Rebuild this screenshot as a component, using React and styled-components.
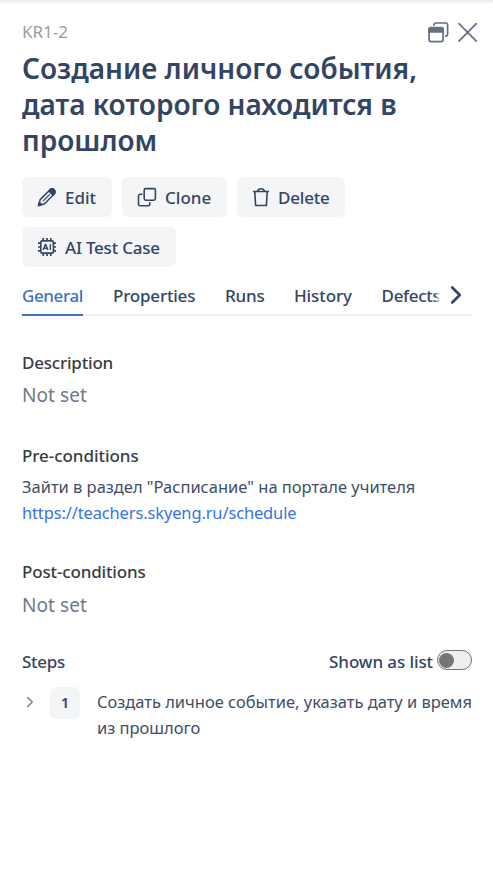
import React from 'react';
import styled, { createGlobalStyle } from 'styled-components';

const Global = createGlobalStyle`
  * { box-sizing: border-box; }
  body { margin: 0; background: #fff; }
  body, button { font-family: "Noto Sans", "Open Sans", sans-serif; }
  button { border: 0; background: none; padding: 0; margin: 0; }
  svg { display: block; flex: none; }
`;

const Panel = styled.main`
  height: 875px;
  padding: 20px 21px 0 22px;
  overflow: hidden;
  color: #344563;
  background: linear-gradient(#ebebed 0, #fff 4px);
`;
const Header = styled.header`
  display: flex;
  justify-content: space-between;
  height: 30px;
  margin-right: -6px;
`;
const CaseId = styled.span`
  font-size: 17px;
  line-height: 24px;
  color: #969dab;
`;
const HeaderActions = styled.div`
  display: flex;
  gap: 8px;
  padding-top: 1px;
  color: #667085;
`;
const IconButton = styled.button`
  display: flex;
  height: 24px;
  color: inherit;
`;
const Title = styled.h1`
  margin: 0;
  font-size: 28px;
  line-height: 36px;
  font-weight: 600;
  white-space: nowrap;
`;
const Actions = styled.div`
  display: flex;
  flex-wrap: wrap;
  gap: 10px;
  margin-top: 19px;
`;
const ActionButton = styled.button`
  display: flex;
  align-items: center;
  gap: 8px;
  width: ${(p) => p.$width}px;
  height: 40px;
  padding-left: 15px;
  border-radius: 6px;
  background: #f3f5f7;
  color: #344563;
  font-size: 17px;
  font-weight: 500;
  letter-spacing: ${(p) => p.$tracking || 0}px;
  white-space: nowrap;
`;
const TabBar = styled.nav`
  position: relative;
  display: flex;
  gap: 30px;
  height: 41px;
  margin-top: 8px;
  overflow: hidden;
  box-shadow: inset 0 -2px #eeeff1;
`;
const Tab = styled.button`
  flex: none;
  height: 41px;
  padding-top: 2px;
  border-bottom: 2px solid ${(p) => (p.$active ? '#4270c4' : 'transparent')};
  color: ${(p) => (p.$active ? '#4270c4' : '#344563')};
  width: ${(p) => p.$width}px;
  text-align: left;
  white-space: nowrap;
  font-size: 17px;
  font-weight: 500;
  letter-spacing: ${(p) => p.$tracking}px;
`;
const ScrollNext = styled.button`
  position: absolute;
  right: 0;
  top: 0;
  display: flex;
  align-items: center;
  justify-content: center;
  width: 37px;
  height: 39px;
  padding-left: 4px;
  color: #344563;
  background: linear-gradient(90deg, #fff0 0, #fffc 4px, #fff 8px);
`;
const Section = styled.section`
  margin-top: ${(p) => p.$top}px;
`;
const Label = styled.h2`
  margin: 0;
  font-size: 17px;
  line-height: 26px;
  font-weight: 500;
  letter-spacing: ${(p) => p.$tracking || 0}px;
  color: ${(p) => (p.$blue ? '#344563' : '#3a3c42')};
`;
const Empty = styled.p`
  margin: ${(p) => p.$top || 6}px 0 0;
  font-size: 19px;
  line-height: 26px;
  letter-spacing: 0.08px;
  color: #6e7889;
`;
const Body = styled.p`
  margin: ${(p) => p.$top || 0}px 0 0;
  font-size: 16.48px;
  line-height: 26px;
  color: #414e67;
  white-space: nowrap;
`;
const Link = styled.a`
  color: #3673e5;
  letter-spacing: -0.13px;
`;
const StepsHead = styled.div`
  display: flex;
  align-items: center;
  justify-content: space-between;
`;
const ToggleLabel = styled.div`
  display: flex;
  gap: 4px;
`;
const Toggle = styled.span`
  display: flex;
  align-items: center;
  width: 35px;
  height: 20px;
  margin-top: 1px;
  padding-left: 1px;
  border: 1px solid #737373;
  border-radius: 10px;
  background: #efefef;
`;
const Knob = styled.span`
  width: 15px;
  height: 15px;
  border-radius: 50%;
  background: #757575;
`;
const Step = styled.div`
  display: flex;
  align-items: flex-start;
  margin-top: 12px;
`;
const Expander = styled.span`
  width: 28px;
  padding: 9px 0 0 2px;
  color: #727b8c;
`;
const Number = styled.span`
  width: 30px;
  height: 32px;
  margin-right: 17px;
  border-radius: 6px;
  background: #f3f5f7;
  text-align: center;
  font-size: 15px;
  font-weight: 600;
  line-height: 31px;
`;

const Windows = () => (
  <svg width="21" height="22" viewBox="0 0 21 22" fill="none" stroke="currentColor" strokeWidth="1.7">
    <rect x="1.1" y="6.8" width="14" height="13.8" rx="2" />
    <path d="M1 11V8.2Q1 6.5 3 6.5h10.2q2 0 2 1.7V11z" fill="currentColor" />
    <path d="M5.8 4.8Q5.8 2 8.2 2h9.4q2 0 2 2v9q0 2-2.6 2.3" />
  </svg>
);
const Close = () => (
  <svg width="21" height="22" viewBox="0 0 21 22" fill="none" stroke="currentColor" strokeWidth="1.7" strokeLinecap="round">
    <path d="m2 2.7 17.3 17.5M19.3 2.7 2 20.2" />
  </svg>
);
const Pencil = () => (
  <svg width="20" height="20" viewBox="0 0 20 20" fill="none" stroke="currentColor" strokeWidth="1.5" strokeLinejoin="round">
    <path d="M1.8 18.2 3.2 12.6 12.8 3Q15 .8 17.1 2.7T17 7.2L7.6 16.7z" />
    <path d="m11.8 4 1.7-1.7Q15.4 1 17.1 2.7t.6 3.8l-1.7 1.8zM1.4 18.7l.8-3.4 2.4 2.4z" fill="currentColor" />
    <path d="M6 14.1 12.7 7.4" strokeWidth="1.3" />
  </svg>
);
const Copy = () => (
  <svg width="20" height="20" viewBox="0 0 20 20" fill="none" stroke="currentColor" strokeWidth="1.6">
    <rect x="7.2" y="1.6" width="11.2" height="11.6" rx="1.6" />
    <path d="M5.5 7.3H2.9Q1.5 7.3 1.5 9v8q0 1.7 1.6 1.7h8q1.7 0 1.7-1.7v-1.8" />
  </svg>
);
const Trash = () => (
  <svg width="18" height="20" viewBox="0 0 18 20" fill="none" stroke="currentColor" strokeWidth="1.6" strokeLinejoin="round">
    <path d="M1 4.5h16M5.4 4.2C6 2.4 7.4 1.7 9 1.7s3 .7 3.6 2.5M2.8 4.8l.8 13.7h10.8l.8-13.7" />
  </svg>
);
const Chip = () => (
  <svg width="20" height="20" viewBox="0 0 20 20" fill="none" stroke="currentColor" strokeWidth="1.7">
    <rect x="3.8" y="3.8" width="12.6" height="12.4" rx="1.5" />
    <path d="M6.2 1v2.5m3.8-2.5v2.5M13.8 1v2.5M6.2 16.5V19m3.8-2.5V19m3.8-2.5V19M1 6.2h2.5M1 10h2.5M1 13.8h2.5M16.5 6.2H19M16.5 10H19M16.5 13.8H19" />
    <path d="m6.2 12.9 2.1-5.4h.5l2.1 5.4M7 11.3h3M13.3 7.2v5.7" strokeWidth="1.4" />
  </svg>
);
const Chevron = ({ size, width }) => (
  <svg width={size} height={size} viewBox="0 0 20 20" fill="none" stroke="currentColor" strokeWidth={width} strokeLinecap="round" strokeLinejoin="round">
    <path d="m6.2 2.5 7.6 7.5-7.6 7.5" />
  </svg>
);

const actions = [
  { text: 'Edit', icon: Pencil, width: 90 },
  { text: 'Clone', icon: Copy, width: 105 },
  { text: 'Delete', icon: Trash, width: 108, tracking: -0.2 },
  { text: 'AI Test Case', icon: Chip, width: 154, tracking: -0.22 },
];
const tabs = [
  ['General', 61, -0.4],
  ['Properties', 82, -0.2],
  ['Runs', 39, -0.2],
  ['History', 57.5, -0.1],
  ['Defects', 60, -0.3],
];

export default function App() {
  return (
    <Panel>
      <Global />
      <Header>
        <CaseId>KR1-2</CaseId>
        <HeaderActions>
          <IconButton aria-label="Open in window"><Windows /></IconButton>
          <IconButton aria-label="Close"><Close /></IconButton>
        </HeaderActions>
      </Header>
      <Title>
        Создание личного события,<br />дата которого находится в<br />прошлом
      </Title>
      <Actions>
        {actions.map(({ text, icon: Icon, width, tracking }) => (
          <ActionButton key={text} $width={width} $tracking={tracking}><Icon />{text}</ActionButton>
        ))}
      </Actions>
      <TabBar>
        {tabs.map(([text, width, tracking], i) => (
          <Tab key={text} $active={i === 0} $width={width} $tracking={tracking}>{text}</Tab>
        ))}
        <ScrollNext aria-label="More tabs"><Chevron size={20} width={2.6} /></ScrollNext>
      </TabBar>
      <Section $top={34}>
        <Label $tracking={-0.2}>Description</Label>
        <Empty>Not set</Empty>
      </Section>
      <Section $top={35}>
        <Label $tracking={-0.05}>Pre-conditions</Label>
        <Body $top={5}>
          Зайти в раздел "Расписание" на портале учителя<br />
          <Link>https://teachers.skyeng.ru/schedule</Link>
        </Body>
      </Section>
      <Section $top={33}>
        <Label $tracking={-0.15}>Post-conditions</Label>
        <Empty $top={7}>Not set</Empty>
      </Section>
      <Section $top={31}>
        <StepsHead>
          <Label $blue $tracking={-0.3}>Steps</Label>
          <ToggleLabel>
            <Label $blue $tracking={-0.1}>Shown as list</Label>
            <Toggle role="switch" aria-checked="false"><Knob /></Toggle>
          </ToggleLabel>
        </StepsHead>
        <Step>
          <Expander><Chevron size={12} width={2.4} /></Expander>
          <Number>1</Number>
          <Body $top={2}>Создать личное событие, указать дату и время<br />из прошлого</Body>
        </Step>
      </Section>
    </Panel>
  );
}
